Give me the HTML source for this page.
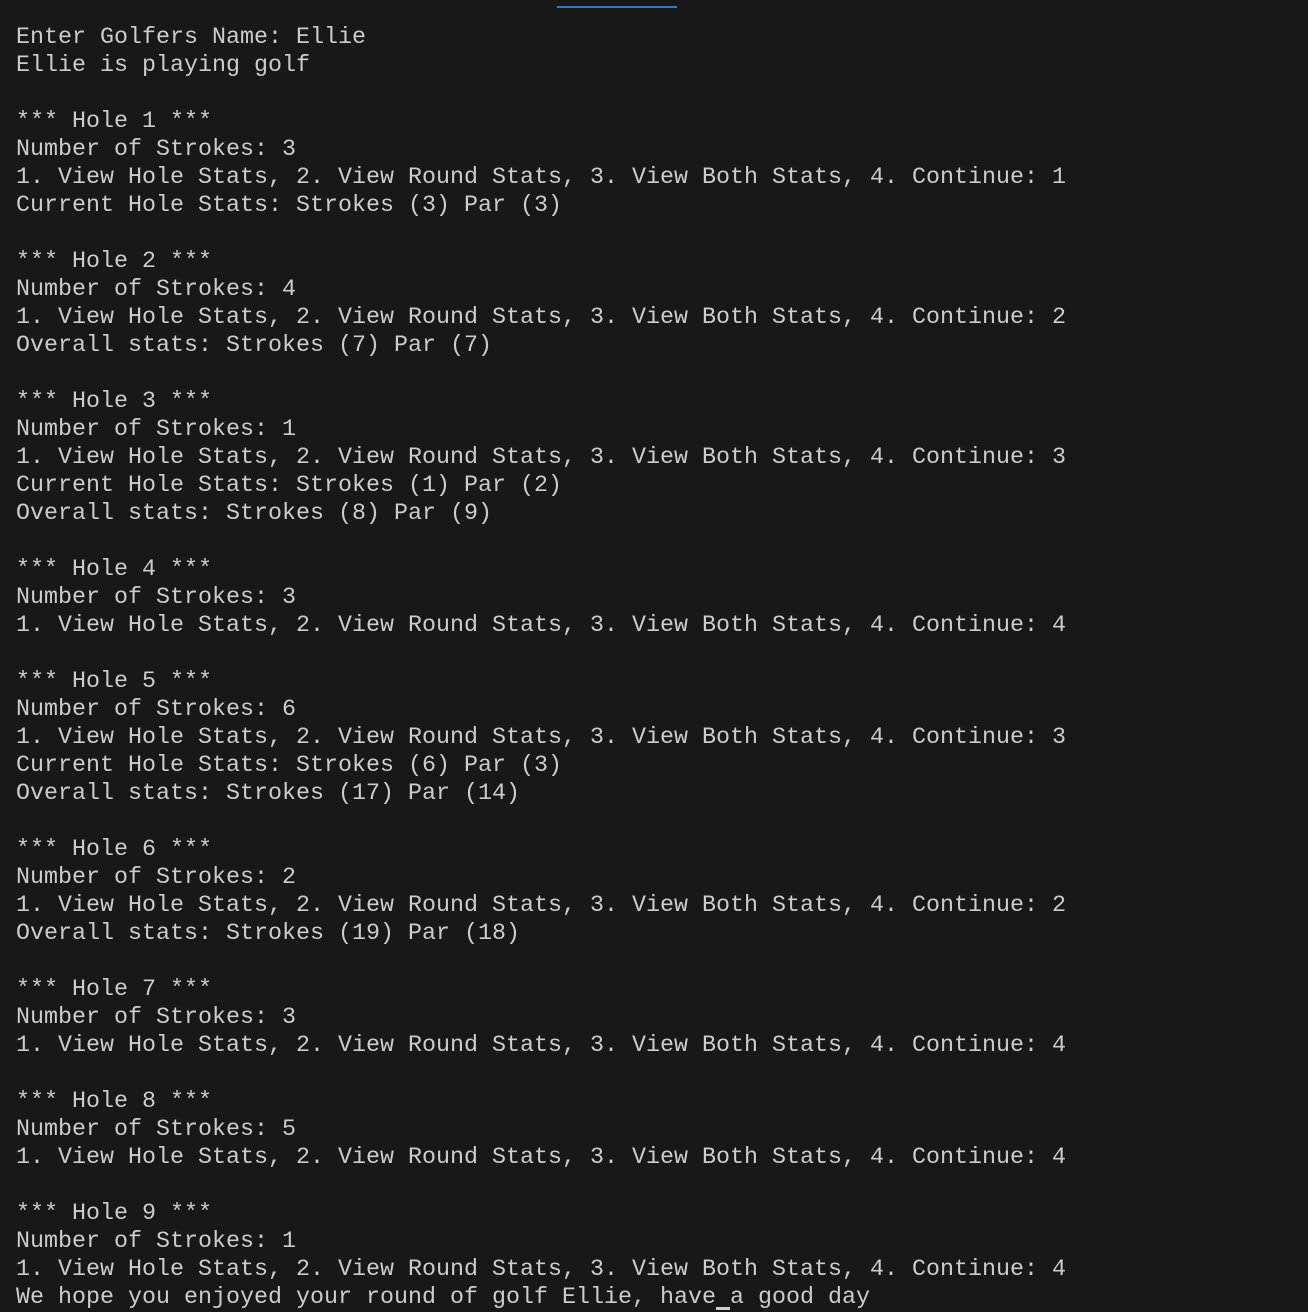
<!DOCTYPE html>
<html><head><style>
html,body{margin:0;padding:0;background:#181818;width:1308px;height:1312px;overflow:hidden}
.bar{position:absolute;left:557px;top:6px;width:120px;height:2px;background:#2b79d0}
pre{position:absolute;left:16px;top:24px;margin:0;font-family:"Liberation Mono",monospace;font-size:23.33px;line-height:28px;color:#cccccc}
.cur{position:absolute;left:716px;top:1307px;width:14px;height:3px;background:#cccccc}
</style></head><body>
<div class="bar"></div>
<pre>Enter Golfers Name: Ellie
Ellie is playing golf

*** Hole 1 ***
Number of Strokes: 3
1. View Hole Stats, 2. View Round Stats, 3. View Both Stats, 4. Continue: 1
Current Hole Stats: Strokes (3) Par (3)

*** Hole 2 ***
Number of Strokes: 4
1. View Hole Stats, 2. View Round Stats, 3. View Both Stats, 4. Continue: 2
Overall stats: Strokes (7) Par (7)

*** Hole 3 ***
Number of Strokes: 1
1. View Hole Stats, 2. View Round Stats, 3. View Both Stats, 4. Continue: 3
Current Hole Stats: Strokes (1) Par (2)
Overall stats: Strokes (8) Par (9)

*** Hole 4 ***
Number of Strokes: 3
1. View Hole Stats, 2. View Round Stats, 3. View Both Stats, 4. Continue: 4

*** Hole 5 ***
Number of Strokes: 6
1. View Hole Stats, 2. View Round Stats, 3. View Both Stats, 4. Continue: 3
Current Hole Stats: Strokes (6) Par (3)
Overall stats: Strokes (17) Par (14)

*** Hole 6 ***
Number of Strokes: 2
1. View Hole Stats, 2. View Round Stats, 3. View Both Stats, 4. Continue: 2
Overall stats: Strokes (19) Par (18)

*** Hole 7 ***
Number of Strokes: 3
1. View Hole Stats, 2. View Round Stats, 3. View Both Stats, 4. Continue: 4

*** Hole 8 ***
Number of Strokes: 5
1. View Hole Stats, 2. View Round Stats, 3. View Both Stats, 4. Continue: 4

*** Hole 9 ***
Number of Strokes: 1
1. View Hole Stats, 2. View Round Stats, 3. View Both Stats, 4. Continue: 4
We hope you enjoyed your round of golf Ellie, have a good day</pre>
<div class="cur"></div>
</body></html>
